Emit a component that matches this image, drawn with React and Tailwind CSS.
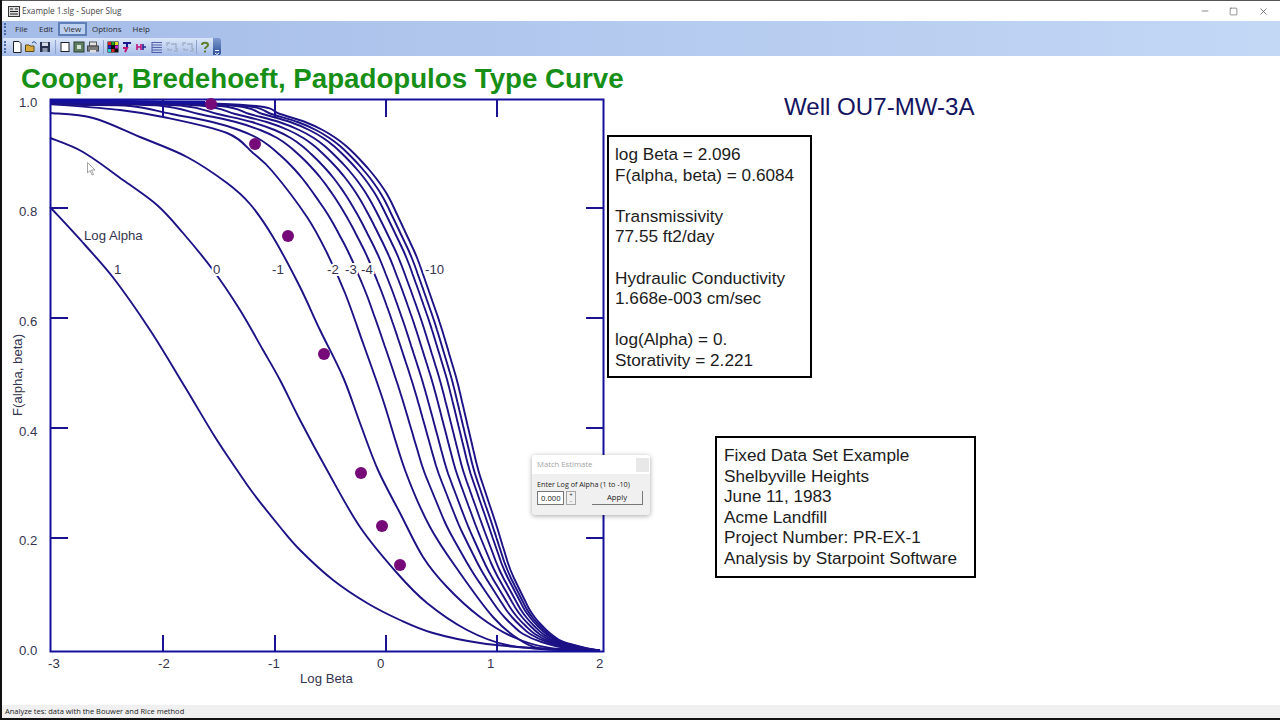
import React from "react";
import { Minus, Square, X } from "lucide-react";

const c1 = [[50,207],[85,245],[115,280],[150,330],[185,387],[215,437],[237,470],[253,493],[280,527],[300,550],[333,580],[367,603],[400,620],[433,633],[480,643],[533,648],[600,650]];
const c2 = [[50,138],[83,152],[123,180],[157,205],[183,233],[213,270],[240,310],[263,350],[280,380],[300,420],[327,470],[360,527],[397,573],[427,603],[467,630],[507,645],[560,650],[600,650]];
const c3 = [[50,113],[93,118],[140,137],[187,157],[227,183],[250,204],[273,237],[300,287],[320,330],[343,377],[360,423],[378,470],[400,513],[423,557],[447,587],[480,617],[513,637],[550,648],[600,650]];
const c4 = [[50,104],[120,110],[163,117],[227,133],[253,153],[273,172],[307,217],[327,253],[345,293],[363,343],[383,400],[405,470],[430,527],[460,573],[493,617],[520,640],[545,649],[600,650.5]];
const c12 = [[240,104],[273,112],[300,118],[320,128],[343,142],[370,170],[387,193],[417,257],[440,323],[457,380],[478,470],[497,527],[510,570],[533,617],[560,643],[583,650]];

function xAt(pts, y) {
  if (y <= pts[0][1]) return pts[0][0];
  for (let i = 1; i < pts.length; i++) {
    if (y <= pts[i][1]) {
      const [x0, y0] = pts[i - 1];
      const [x1, y1] = pts[i];
      return x0 + ((x1 - x0) * (y - y0)) / (y1 - y0);
    }
  }
  return pts[pts.length - 1][0];
}

const smooth = (pts, y) => {
  const r = 10;
  let s = 0;
  let n = 0;
  for (let d = -r; d <= r; d += 2) {
    s += xAt(pts, Math.max(104, Math.min(650, y + d)));
    n++;
  }
  return s / n;
};
const between = (w) => {
  const body = [];
  for (let y = 106; y <= 644; y += 8) {
    body.push([smooth(c4, y) + (smooth(c12, y) - smooth(c4, y)) * w, y]);
  }
  return [[50, 100.5 + (1 - w) * 3.5], [50 + (190 * w) * 0.55, 101.5 + (1 - w) * 4.5], ...body, [562 + 26 * w, 648.5], [600, 650.5]];
};
const toD = (pts) => {
  let d = `M${pts[0][0]} ${pts[0][1]}`;
  for (let i = 0; i < pts.length - 1; i++) {
    const p0 = pts[Math.max(0, i - 1)];
    const p1 = pts[i];
    const p2 = pts[i + 1];
    const p3 = pts[Math.min(pts.length - 1, i + 2)];
    const a = [p1[0] + (p2[0] - p0[0]) / 6, p1[1] + (p2[1] - p0[1]) / 6];
    const b = [p2[0] - (p3[0] - p1[0]) / 6, p2[1] - (p3[1] - p1[1]) / 6];
    d += ` C${a[0].toFixed(1)} ${a[1].toFixed(1)} ${b[0].toFixed(1)} ${b[1].toFixed(1)} ${p2[0].toFixed(1)} ${p2[1].toFixed(1)}`;
  }
  return d;
};
const curves = [c1, c2, c3, c4, ...[0.25, 0.44, 0.57, 0.69, 0.79, 0.88, 0.94, 1].map(between)];
const dots = [[211,104],[255,144],[288,236],[324,354],[361,473],[382,526],[400,565]];

const labelProps = { fill: "#34344f", fontSize: 13.2, stroke: "#fff", strokeWidth: 4, paintOrder: "stroke" };

function Chart() {
  return (
    <svg width="606" height="610" viewBox="0 92 606 610" className="shrink-0 block" style={{ fontFamily: '"Liberation Sans", Arial, sans-serif' }}>
      {curves.map((pts, i) => (
        <path key={i} d={toD(pts)} fill="none" stroke="#1c1285" strokeWidth="1.9" strokeLinejoin="round" />
      ))}
      <path d="M50 101.5L205 102.5" stroke="#15109c" strokeWidth="3" />
      <rect x="50.5" y="99.5" width="553" height="552" fill="none" stroke="#15109c" strokeWidth="2" />
      {[208, 318, 428, 538].map((y) => (
        <g key={y} stroke="#1a1290" strokeWidth="2">
          <path d={`M50 ${y}H68`} />
          <path d={`M586 ${y}H603`} />
        </g>
      ))}
      {[163, 275, 386, 497].map((x) => (
        <g key={x} stroke="#1a1290" strokeWidth="2">
          <path d={`M${x} 100V117`} />
          <path d={`M${x} 635V651`} />
        </g>
      ))}
      {dots.map(([x, y]) => (
        <circle key={x} cx={x} cy={y} r="6" fill="#750a78" />
      ))}
      <text x="84" y="240" {...labelProps}>Log Alpha</text>
      <text x="114" y="274" {...labelProps}>1</text>
      <text x="213" y="274" {...labelProps}>0</text>
      <text x="272" y="274" {...labelProps}>-1</text>
      <text x="327" y="274" {...labelProps}>-2</text>
      <text x="345" y="274" {...labelProps}>-3</text>
      <text x="361" y="274" {...labelProps}>-4</text>
      <text x="425" y="274" {...labelProps}>-10</text>
      {[["1.0",106.5],["0.8",215.5],["0.6",325.5],["0.4",435.5],["0.2",544.5],["0.0",654.5]].map(([t, y]) => (
        <text key={t} x="19" y={y} fill="#34344f" fontSize="13.2">{t}</text>
      ))}
      {[["-3",48],["-2",158],["-1",268],["0",377],["1",487],["2",596]].map(([t, x]) => (
        <text key={t} x={x} y="668" fill="#34344f" fontSize="13.2">{t}</text>
      ))}
      <text x="300" y="683" fill="#34344f" fontSize="13.2">Log Beta</text>
      <text transform="translate(22 416) rotate(-90)" fill="#34344f" fontSize="13.2">F(alpha, beta)</text>
      <path d="M87.5 162.5V173L90 170.5L92 175L93.5 174.5L91.5 170H95Z" fill="#fff" stroke="#8a8a8a" strokeWidth="0.8" />
    </svg>
  );
}

const Icon = ({ children }) => (
  <svg width="14" height="14" viewBox="0 0 14 14" className="shrink-0">{children}</svg>
);
const Sep = ({ w = "w-[6px]" }) => (
  <div className={`${w} h-[14px] flex justify-center shrink-0`}>
    <div className="w-px h-full bg-[#8ea4cf]" />
  </div>
);

function Toolbar() {
  return (
    <div className="ml-px w-[218px] h-[17px] flex items-center bg-gradient-to-b from-[#dbe6f8] to-[#a9bfe9] rounded-r-[2px]">
      <div className="w-[6px] h-[12px] ml-px border-l-2 border-dotted border-[#4a6aa5]" />
      <Icon><path d="M3.5 1.5H9L11 3.5V12.5H3.5Z" fill="#fff" stroke="#222" /></Icon>
      <Icon><path d="M1.5 5H5L6 6H10V11.5H1.5Z" fill="#d9a93c" stroke="#5a4a1a" /><path d="M8 3L10 1.5L12.5 3.5" fill="none" stroke="#244a9a" /></Icon>
      <Icon><rect x="2" y="2" width="10" height="10" fill="#27314d" /><rect x="4" y="2.5" width="6" height="3.5" fill="#d5dbe6" /><rect x="4.5" y="8" width="5" height="4" fill="#8c97ad" /></Icon>
      <Sep />
      <Icon><rect x="3" y="2.5" width="8" height="9" fill="#fff" stroke="#222" /></Icon>
      <Icon><rect x="2" y="2" width="10" height="10" fill="#5e7f62" stroke="#2e3f30" /><rect x="5" y="5" width="4" height="4" fill="#d7e3d4" /></Icon>
      <Icon><rect x="3.5" y="2" width="7" height="4" fill="#e4e4e4" stroke="#555" /><rect x="1.5" y="6" width="11" height="5" fill="#7d7d7d" stroke="#444" /><rect x="4" y="10" width="6" height="2.5" fill="#ddd" /></Icon>
      <Sep />
      <Icon>
        <rect x="1.5" y="1.5" width="11" height="11" fill="#111" />
        <rect x="2" y="2" width="3" height="3" fill="#d22" /><rect x="5.5" y="2" width="3" height="3" fill="#2a2" /><rect x="9" y="2" width="3" height="3" fill="#dd2" />
        <rect x="2" y="5.5" width="3" height="3" fill="#22c" /><rect x="9" y="5.5" width="3" height="3" fill="#c2c" />
        <rect x="2" y="9" width="3" height="3" fill="#2cc" /><rect x="5.5" y="9" width="3" height="3" fill="#d22" />
      </Icon>
      <Icon><path d="M3 3H11M7 3V8" stroke="#1a1a8f" strokeWidth="2" fill="none" /><path d="M3 8L7 8L5 12" stroke="#c0147a" strokeWidth="2" fill="none" /></Icon>
      <Icon><path d="M3 4V10M3 7H7M7 4V10" stroke="#c0147a" strokeWidth="1.6" fill="none" /><path d="M9 4V10M9 7H12" stroke="#24248f" strokeWidth="1.6" fill="none" /></Icon>
      <div className="w-[2px] shrink-0" />
      <Icon><path d="M2 2.5H12M2 5H12M2 7.5H12M2 10H12M2 12.5H12" stroke="#5560a8" strokeWidth="1" /><path d="M2 2V13" stroke="#5560a8" /></Icon>
      <div className="w-px shrink-0" />
      <Icon><path d="M2 6V3H5M12 8V11H9M6 4H11V9M3 8V10H7" stroke="#9fb0c6" strokeWidth="1.4" fill="none" /></Icon>
      <div className="w-[2px] shrink-0" />
      <Icon><path d="M2 6V3H5M12 8V11H9M6 4H11V9M3 8V10H7" stroke="#9fb0c6" strokeWidth="1.4" fill="none" /></Icon>
      <Sep w="w-[3px]" />
      <Icon><path d="M4 5C4 2 10 2 10 5C10 7 7 7 7 9" stroke="#5d7d2a" strokeWidth="2" fill="none" /><rect x="6" y="10.5" width="2" height="2" fill="#5d7d2a" /></Icon>
      <div className="ml-auto w-[8px] h-[17px] bg-gradient-to-b from-[#7f9bd0] to-[#2d4f96] flex items-end justify-center rounded-r-[2px]">
        <svg width="6" height="6" viewBox="0 0 6 6"><path d="M1 1.5H5M1 4L3 5.5L5 4" stroke="#fff" strokeWidth="1" fill="none" /></svg>
      </div>
    </div>
  );
}

function Dialog() {
  return (
    <div className="absolute left-[530px] top-[455px] w-[118px] h-[60px] bg-[#f0f0f0] rounded-[3px] shadow-[0_1px_5px_rgba(0,0,0,0.35)] text-[7.7px] text-[#222] overflow-hidden" style={{ fontFamily: '"Open Sans", sans-serif' }}>
      <div className="h-[19px] bg-white flex items-center justify-between pl-[5px] pr-px text-[#a3a3a3]">
        <span>Match Estimate</span>
        <div className="w-[13px] h-[14px] bg-[#e8e8e8]" />
      </div>
      <div className="pl-[5px] pt-[5px] text-[7.2px] leading-[11px]">Enter Log of Alpha (1 to -10)</div>
      <div className="flex items-center pl-[5px] pt-[1px]">
        <div className="w-[27px] h-[14px] bg-white border border-[#777] pl-[3px] leading-[12px]">0.000</div>
        <div className="ml-[2px] w-[10px] h-[14px] flex flex-col items-center justify-between bg-[#f0f0f0] border border-[#a5a5a5] text-[6px] leading-[6px]">
          <span className="leading-[6px]">+</span>
          <span className="leading-[6px]">-</span>
        </div>
        <div className="ml-[16px] w-[51px] h-[14px] flex items-center justify-center bg-[#f0f0f0] border-b border-r border-[#777]">Apply</div>
      </div>
    </div>
  );
}

const Box = ({ className, lines }) => (
  <div className={`border-2 border-black text-[17.2px] leading-[20.6px] text-[#1c1c1c] ${className}`}>
    {lines.map((l, i) => (
      <div key={i} className="h-[20.6px] whitespace-pre">{l || " "}</div>
    ))}
  </div>
);

export default function App() {
  return (
    <div className="relative w-[1280px] h-[720px] overflow-hidden bg-white flex flex-col border-l-2 border-b-2 border-[#111]" style={{ fontFamily: '"Liberation Sans", Arial, sans-serif' }}>
      <div className="h-[21px] shrink-0 flex items-center border-t border-[#555] text-[8.2px] text-[#444]" style={{ fontFamily: '"Open Sans", sans-serif' }}>
        <svg width="12" height="11" viewBox="0 0 12 11" className="ml-[6px] mr-[2px] shrink-0">
          <rect x="0.5" y="0.5" width="11" height="10" fill="#ddd" stroke="#333" />
          <path d="M2 3H5M7 3H10M2 5.5H10M2 8H10" stroke="#222" strokeWidth="1.2" />
        </svg>
        <span>Example 1.slg - Super Slug</span>
        <div className="ml-auto mr-[2px] flex items-center text-[#444]">
          <div className="w-[29px] flex justify-center"><Minus size={10} strokeWidth={1.5} /></div>
          <div className="w-[29px] flex justify-center"><Square size={9} strokeWidth={1.5} /></div>
          <div className="w-[30px] flex justify-center"><X size={11} strokeWidth={1.5} /></div>
        </div>
      </div>
      <div className="h-[35px] shrink-0 bg-gradient-to-r from-[#a5bce8] to-[#c3d8f5] flex flex-col">
        <div className="h-[17px] flex items-center pl-[2px] pb-[1px] text-[8px] text-[#2b2b2b]" style={{ fontFamily: '"Open Sans", sans-serif' }}>
          <div className="w-[6px] h-[12px] border-l-2 border-dotted border-[#4a6aa5]" />
          <span className="w-[27px] pl-[5px]">File</span>
          <span className="w-[21px] pl-[2px]">Edit</span>
          <span className="w-[29px] h-[14px] leading-[10px] text-center border-2 border-[#5f7fb8] bg-[#bcd0f0]">View</span>
          <span className="ml-[5px]">Options</span>
          <span className="ml-[11px]">Help</span>
        </div>
        <Toolbar />
      </div>
      <div className="flex-1 flex flex-col min-h-0">
        <div className="h-[36px] shrink-0 pl-[19px] text-[27.7px] leading-[46px] font-bold text-[#178f17] whitespace-nowrap">Cooper, Bredehoeft, Papadopulos Type Curve</div>
        <div className="flex-1 flex min-h-0 -ml-[2px]">
          <Chart />
          <div className="ml-px flex flex-col">
            <div className="ml-[177px] h-[43px] pt-px text-[24.1px] leading-[28px] text-[#14145f] whitespace-nowrap">Well OU7-MW-3A</div>
            <Box
              className="w-[205px] h-[243px] pl-[6px] pt-[7px]"
              lines={["log Beta = 2.096", "F(alpha, beta) = 0.6084", "", "Transmissivity", "77.55 ft2/day", "", "Hydraulic Conductivity", "1.668e-003 cm/sec", "", "log(Alpha) = 0.", "Storativity = 2.221"]}
            />
            <Box
              className="ml-[108px] mt-[58px] w-[261px] h-[142px] pl-[7px] pt-[7px]"
              lines={["Fixed Data Set Example", "Shelbyville Heights", "June 11, 1983", "Acme Landfill", "Project Number: PR-EX-1", "Analysis by Starpoint Software"]}
            />
          </div>
        </div>
        <div className="h-[13px] shrink-0 bg-[#f0f0f0] pl-[3px] text-[7.5px] leading-[13px] text-[#222]" style={{ fontFamily: '"Open Sans", sans-serif' }}>Analyze tes: data with the Bouwer and Rice method</div>
      </div>
      <Dialog />
    </div>
  );
}
